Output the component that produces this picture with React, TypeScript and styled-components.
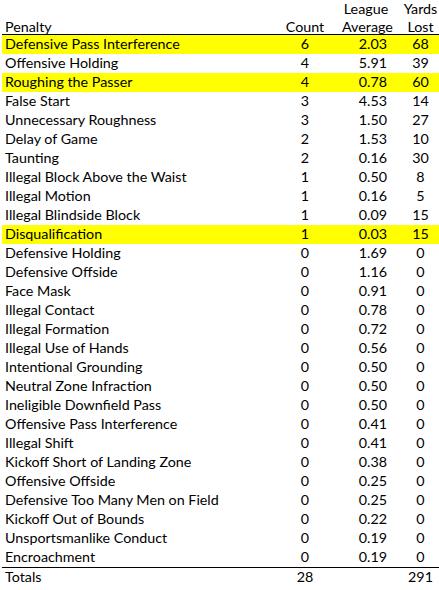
import React from "react";
import styled, { createGlobalStyle } from "styled-components";

const Global = createGlobalStyle`
  html, body { margin: 0; padding: 0; background: #fff; }
  body { font-family: Lato, "Open Sans", sans-serif; color: #000; }
`;

type Row = { name: string; count: number; avg: string; yards: number; hl?: boolean };

const rows: Row[] = [
  { name: "Defensive Pass Interference", count: 6, avg: "2.03", yards: 68, hl: true },
  { name: "Offensive Holding", count: 4, avg: "5.91", yards: 39 },
  { name: "Roughing the Passer", count: 4, avg: "0.78", yards: 60, hl: true },
  { name: "False Start", count: 3, avg: "4.53", yards: 14 },
  { name: "Unnecessary Roughness", count: 3, avg: "1.50", yards: 27 },
  { name: "Delay of Game", count: 2, avg: "1.53", yards: 10 },
  { name: "Taunting", count: 2, avg: "0.16", yards: 30 },
  { name: "Illegal Block Above the Waist", count: 1, avg: "0.50", yards: 8 },
  { name: "Illegal Motion", count: 1, avg: "0.16", yards: 5 },
  { name: "Illegal Blindside Block", count: 1, avg: "0.09", yards: 15 },
  { name: "Disqualification", count: 1, avg: "0.03", yards: 15, hl: true },
  { name: "Defensive Holding", count: 0, avg: "1.69", yards: 0 },
  { name: "Defensive Offside", count: 0, avg: "1.16", yards: 0 },
  { name: "Face Mask", count: 0, avg: "0.91", yards: 0 },
  { name: "Illegal Contact", count: 0, avg: "0.78", yards: 0 },
  { name: "Illegal Formation", count: 0, avg: "0.72", yards: 0 },
  { name: "Illegal Use of Hands", count: 0, avg: "0.56", yards: 0 },
  { name: "Intentional Grounding", count: 0, avg: "0.50", yards: 0 },
  { name: "Neutral Zone Infraction", count: 0, avg: "0.50", yards: 0 },
  { name: "Ineligible Downfield Pass", count: 0, avg: "0.50", yards: 0 },
  { name: "Offensive Pass Interference", count: 0, avg: "0.41", yards: 0 },
  { name: "Illegal Shift", count: 0, avg: "0.41", yards: 0 },
  { name: "Kickoff Short of Landing Zone", count: 0, avg: "0.38", yards: 0 },
  { name: "Offensive Offside", count: 0, avg: "0.25", yards: 0 },
  { name: "Defensive Too Many Men on Field", count: 0, avg: "0.25", yards: 0 },
  { name: "Kickoff Out of Bounds", count: 0, avg: "0.22", yards: 0 },
  { name: "Unsportsmanlike Conduct", count: 0, avg: "0.19", yards: 0 },
  { name: "Encroachment", count: 0, avg: "0.19", yards: 0 },
];

const Sheet = styled.div`
  margin-left: 2px;
  width: 437px;
  font-size: 14.3px;
`;

const Grid = styled.div`
  display: grid;
  grid-template-columns: 266px 74px 56px 41px;
`;

const HeaderRow = styled(Grid)`
  height: 34px;
  border-bottom: 1px solid #000;
  line-height: 18px;
`;

const Body = styled.div`
  border-bottom: 1px solid #000;
`;

const DataRow = styled(Grid)<{ $hl?: boolean }>`
  height: 19px;
  line-height: 18px;
  background: ${(p) => (p.$hl ? "#ffff00" : "transparent")};
`;

const Cell = styled.div<{ $align?: "left" | "center" | "right"; $pl?: number; $pr?: number }>`
  text-align: ${(p) => p.$align || "left"};
  padding-left: ${(p) => p.$pl ?? 0}px;
  padding-right: ${(p) => p.$pr ?? 0}px;
  white-space: nowrap;
`;

const HeadCell = styled(Cell)`
  display: flex;
  flex-direction: column;
  justify-content: flex-end;
  padding-bottom: 0px;
`;

export default function App() {
  return (
    <>
      <Global />
      <Sheet>
        <HeaderRow>
          <HeadCell $pl={3}>Penalty</HeadCell>
          <HeadCell $align="center">Count</HeadCell>
          <HeadCell $align="center" $pr={8}>
            <span>League</span>
            <span>Average</span>
          </HeadCell>
          <HeadCell $align="center" $pl={4}>
            <span>Yards</span>
            <span>Lost</span>
          </HeadCell>
        </HeaderRow>
        <Body>
          {rows.map((r) => (
            <DataRow key={r.name} $hl={r.hl}>
              <Cell $pl={3}>{r.name}</Cell>
              <Cell $align="center">{r.count}</Cell>
              <Cell $align="right" $pr={11}>{r.avg}</Cell>
              <Cell $align="center" $pl={4}>{r.yards}</Cell>
            </DataRow>
          ))}
        </Body>
        <DataRow>
          <Cell $pl={3}>Totals</Cell>
          <Cell $align="center">28</Cell>
          <Cell />
          <Cell $align="center" $pl={4}>291</Cell>
        </DataRow>
      </Sheet>
    </>
  );
}
